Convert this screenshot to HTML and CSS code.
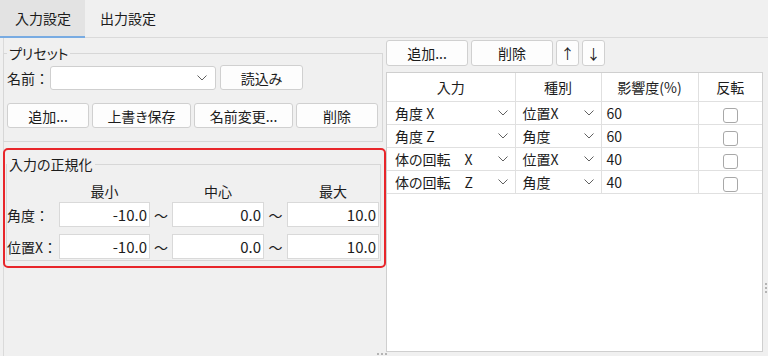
FILE: index.html
```html
<!DOCTYPE html>
<html lang="ja">
  <head>
    <meta charset="UTF-8" />
    <title>入力設定</title>
    <link rel="stylesheet" href="styles.css">
  </head>
  <body>
    <div class="tabs">
      <div class="tab active">入力設定</div>
      <div class="tab">出力設定</div>
    </div>

    <div class="main">
      <section class="left-pane">
        <fieldset class="group preset">
          <legend>プリセット</legend>
          <div class="preset-row">
            <span class="label">名前：</span>
            <div class="combo name-combo">
              <span></span>
              <svg class="chev" width="10" height="6" viewBox="0 0 10 6"><polyline points="0.5,0.5 5,5 9.5,0.5" /></svg>
            </div>
            <button class="btn load-btn">読込み</button>
          </div>
          <div class="preset-buttons">
            <button class="btn w82">追加...</button>
            <button class="btn w99">上書き保存</button>
            <button class="btn w99">名前変更...</button>
            <button class="btn w82">削除</button>
          </div>
        </fieldset>

        <!-- red box marks the normalization group -->
        <div class="norm-wrap">
          <fieldset class="group norm">
            <legend>入力の正規化</legend>
            <div class="norm-grid">
              <span></span>
              <span class="head">最小</span>
              <span></span>
              <span class="head">中心</span>
              <span></span>
              <span class="head">最大</span>

              <span class="label">角度：</span>
              <div class="num">-10.0</div>
              <span class="tilde">〜</span>
              <div class="num">0.0</div>
              <span class="tilde">〜</span>
              <div class="num">10.0</div>

              <span class="label">位置X：</span>
              <div class="num">-10.0</div>
              <span class="tilde">〜</span>
              <div class="num">0.0</div>
              <span class="tilde">〜</span>
              <div class="num">10.0</div>
            </div>
          </fieldset>
        </div>
      </section>

      <section class="right-pane">
        <div class="toolbar">
          <button class="btn w82">追加...</button>
          <button class="btn w82">削除</button>
          <button class="btn arrow">↑</button>
          <button class="btn arrow">↓</button>
        </div>
        <div class="table-box">
          <table class="map-table">
            <colgroup>
              <col style="width: 128px" />
              <col style="width: 86px" />
              <col style="width: 97px" />
              <col />
            </colgroup>
            <thead>
              <tr>
                <th>入力</th>
                <th>種別</th>
                <th>影響度(%)</th>
                <th>反転</th>
              </tr>
            </thead>
            <tbody class="rows"></tbody>
          </table>
        </div>
      </section>
    </div>

    <div class="grip grip-right"><i></i><i></i><i></i></div>
    <div class="grip grip-bottom"><i></i><i></i><i></i></div>

    <script>
      const rows = [
        { input: "角度 X", kind: "位置X", weight: 60 },
        { input: "角度 Z", kind: "角度", weight: 60 },
        { input: "体の回転　X", kind: "位置X", weight: 40 },
        { input: "体の回転　Z", kind: "角度", weight: 40 },
      ];

      const chev = `<svg class="chev" width="10" height="6" viewBox="0 0 10 6"><polyline points="0.5,0.5 5,5 9.5,0.5" /></svg>`;
      const body = document.querySelector(".rows");

      rows.forEach(({ input, kind, weight }) => {
        body.innerHTML += `<tr>
          <td><div class="cell-combo in"><span>${input}</span>${chev}</div></td>
          <td><div class="cell-combo kind"><span>${kind}</span>${chev}</div></td>
          <td class="weight">${weight}</td>
          <td class="check-cell"><span class="check"></span></td>
        </tr>`;
      });
    </script>
  </body>
</html>
```

FILE: styles.css
```css
body {
  margin: 0;
  width: 768px;
  height: 356px;
  overflow: hidden;
  position: relative;
  background: #f0f0f0;
  font-family: "Noto Sans CJK JP", "Noto Sans", sans-serif;
  font-size: 14px;
  font-feature-settings: "palt";
  color: #1c1c1c;
}

/* tabs */
.tabs {
  display: flex;
  height: 37px;
  border-bottom: 1px solid #dadada;
}

.tab {
  padding: 0 14px 0 15px;
  line-height: 36px;
  border-bottom: 2px solid transparent;
  margin-bottom: -1px;
}

.tab.active {
  background: #e3e3e3;
  border-bottom-color: #78abe2;
}

.main {
  display: flex;
  height: 318px;
}

/* left side */
.left-pane {
  width: 379px;
  margin-left: 3px;
  border-left: 1px solid #dadada;
}

.group {
  margin: 0;
  border: 1px solid #d7d7d7;
  min-width: 0;
}

.group legend {
  padding: 0 2px;
  margin-left: 0;
  line-height: 16px;
}

.preset {
  margin: 7px 0 0 -1px;
  padding: 4px 3px 13px 3px;
}

.preset-row {
  display: flex;
  align-items: center;
  height: 25px;
}

.label {
  white-space: nowrap;
  font-feature-settings: normal;
}

.preset-row .label {
  width: 43px;
}

.combo {
  display: flex;
  align-items: center;
  justify-content: space-between;
  box-sizing: border-box;
  background: #fff;
  border: 1px solid #cfcfcf;
  border-radius: 3px;
}

.name-combo {
  width: 166px;
  height: 24px;
  padding: 0 8px 0 6px;
}

.chev {
  fill: none;
  stroke: #606060;
  stroke-width: 1;
  flex-shrink: 0;
}

.btn {
  box-sizing: border-box;
  height: 25px;
  padding: 0;
  background: #fdfdfd;
  border: 1px solid #d0d0d0;
  border-radius: 3px;
  font: inherit;
  color: inherit;
}

.load-btn {
  width: 83px;
  margin-left: 4px;
}

.w82 {
  width: 82px;
}

.w99 {
  width: 99px;
}

.preset-buttons {
  display: flex;
  gap: 3px;
  margin-top: 13px;
}

.norm-wrap {
  position: relative;
  margin: 6px -3px 0 -1px;
  padding: 8px 5px 7px 3px;
}

.norm-wrap::after {
  content: "";
  position: absolute;
  inset: 0;
  border: 2px solid #e8262b;
  border-radius: 5px;
}

.norm {
  padding: 10px 0 6px 0;
}

.norm-grid {
  display: grid;
  grid-template-columns: 52px 91px 22px 92px 23px 92px;
  grid-template-rows: 18px 25px 25px;
  row-gap: 2px;
  align-items: center;
}

.norm-grid .num:nth-child(n + 13),
.norm-grid .label:nth-child(n + 13),
.norm-grid .tilde:nth-child(n + 13) {
  margin-top: 10px;
}

.head {
  text-align: center;
}

.num {
  box-sizing: border-box;
  height: 25px;
  line-height: 24px;
  background: #fff;
  border: 1px solid #d9d9d9;
  text-align: right;
  padding-right: 2px;
  font-size: 15px;
}

.tilde {
  text-align: center;
  font-feature-settings: normal;
}

/* right side */
.right-pane {
  width: 377px;
  margin-left: 3px;
  padding-top: 2px;
}

.toolbar {
  display: flex;
  gap: 3px;
}

.toolbar .btn {
  height: 26px;
}

.btn.arrow {
  width: 23px;
}

.table-box {
  margin-top: 6px;
  height: 280px;
  box-sizing: border-box;
  background: #fff;
  border: 1px solid #cfcfcf;
}

.map-table {
  width: 100%;
  border-collapse: collapse;
  table-layout: fixed;
}

.map-table th {
  height: 28px;
  font-weight: normal;
  text-align: center;
  border-right: 1px solid #e0e0e0;
  border-bottom: 1px solid #e0e0e0;
  padding: 0;
}

.map-table td {
  height: 22px;
  padding: 0;
  border-right: 1px solid #e0e0e0;
  border-bottom: 1px solid #e0e0e0;
}

.map-table th:last-child,
.map-table td:last-child {
  border-right: none;
}

.cell-combo {
  display: flex;
  align-items: center;
  justify-content: space-between;
}

.cell-combo.in {
  padding: 0 7px 0 8px;
}

.cell-combo.kind {
  padding: 0 7px 0 7px;
}

.weight {
  padding-left: 5px !important;
}

.check-cell {
  text-align: center;
}

.check {
  display: inline-block;
  width: 15px;
  height: 15px;
  box-sizing: border-box;
  border: 1px solid #a8a8a8;
  border-radius: 3px;
  vertical-align: middle;
}

/* splitter grips */
.grip {
  position: absolute;
  display: flex;
  gap: 2px;
}

.grip i {
  width: 2px;
  height: 2px;
  background: #b4b4b4;
}

.grip-right {
  right: 1px;
  top: 283px;
  flex-direction: column;
}

.grip-bottom {
  left: 377px;
  top: 353px;
}
```
